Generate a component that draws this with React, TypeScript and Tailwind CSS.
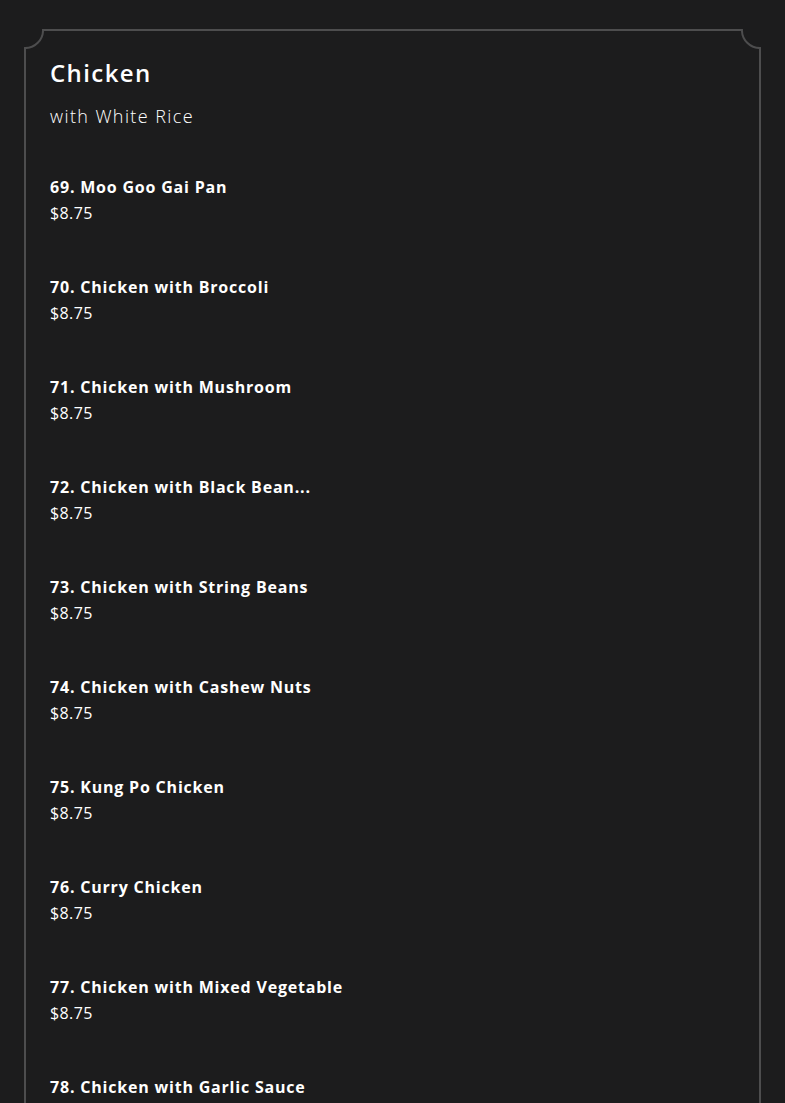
import React from "react";

const items = [
  "69. Moo Goo Gai Pan",
  "70. Chicken with Broccoli",
  "71. Chicken with Mushroom",
  "72. Chicken with Black Bean...",
  "73. Chicken with String Beans",
  "74. Chicken with Cashew Nuts",
  "75. Kung Po Chicken",
  "76. Curry Chicken",
  "77. Chicken with Mixed Vegetable",
  "78. Chicken with Garlic Sauce",
];

function Corner({ side }: { side: "left" | "right" }) {
  return (
    <div
      className={
        side === "left"
          ? "absolute -left-[2px] -top-[2px] w-[20px] h-[20px] bg-[#1c1c1d]"
          : "absolute -right-[2px] -top-[2px] w-[20px] h-[20px] bg-[#1c1c1d]"
      }
    >
      <svg width="20" height="20" viewBox="0 0 20 20" className={side === "right" ? "-scale-x-100" : ""}>
        <path d="M19 0 A18 18 0 0 1 0 19" fill="none" stroke="#4d4d4e" strokeWidth="2" />
      </svg>
    </div>
  );
}

export default function App() {
  return (
    <div
      className="bg-[#1c1c1d] pt-[29px] px-[24px] overflow-hidden h-[1103px]"
      style={{ fontFamily: "'Open Sans', 'DejaVu Sans', sans-serif" }}
    >
      <div className="relative border-x-2 border-t-2 border-[#4d4d4e] px-[24px] pt-[26px] min-h-[1200px]">
        <Corner side="left" />
        <Corner side="right" />
        <h2 className="text-[24px] leading-[32px] font-semibold text-white tracking-[1.4px]">Chicken</h2>
        <p className="mt-[15px] text-[18px] leading-[24px] font-light text-white tracking-[1.4px]">with White Rice</p>
        <div className="mt-[46px] flex flex-col gap-[48px]">
          {items.map((name) => (
            <div key={name} className="flex flex-col">
              <div className="text-[16px] leading-[26px] font-bold text-white tracking-[0.8px]">{name}</div>
              <div className="text-[16px] leading-[26px] text-white tracking-[0.4px]">$8.75</div>
            </div>
          ))}
        </div>
      </div>
    </div>
  );
}
